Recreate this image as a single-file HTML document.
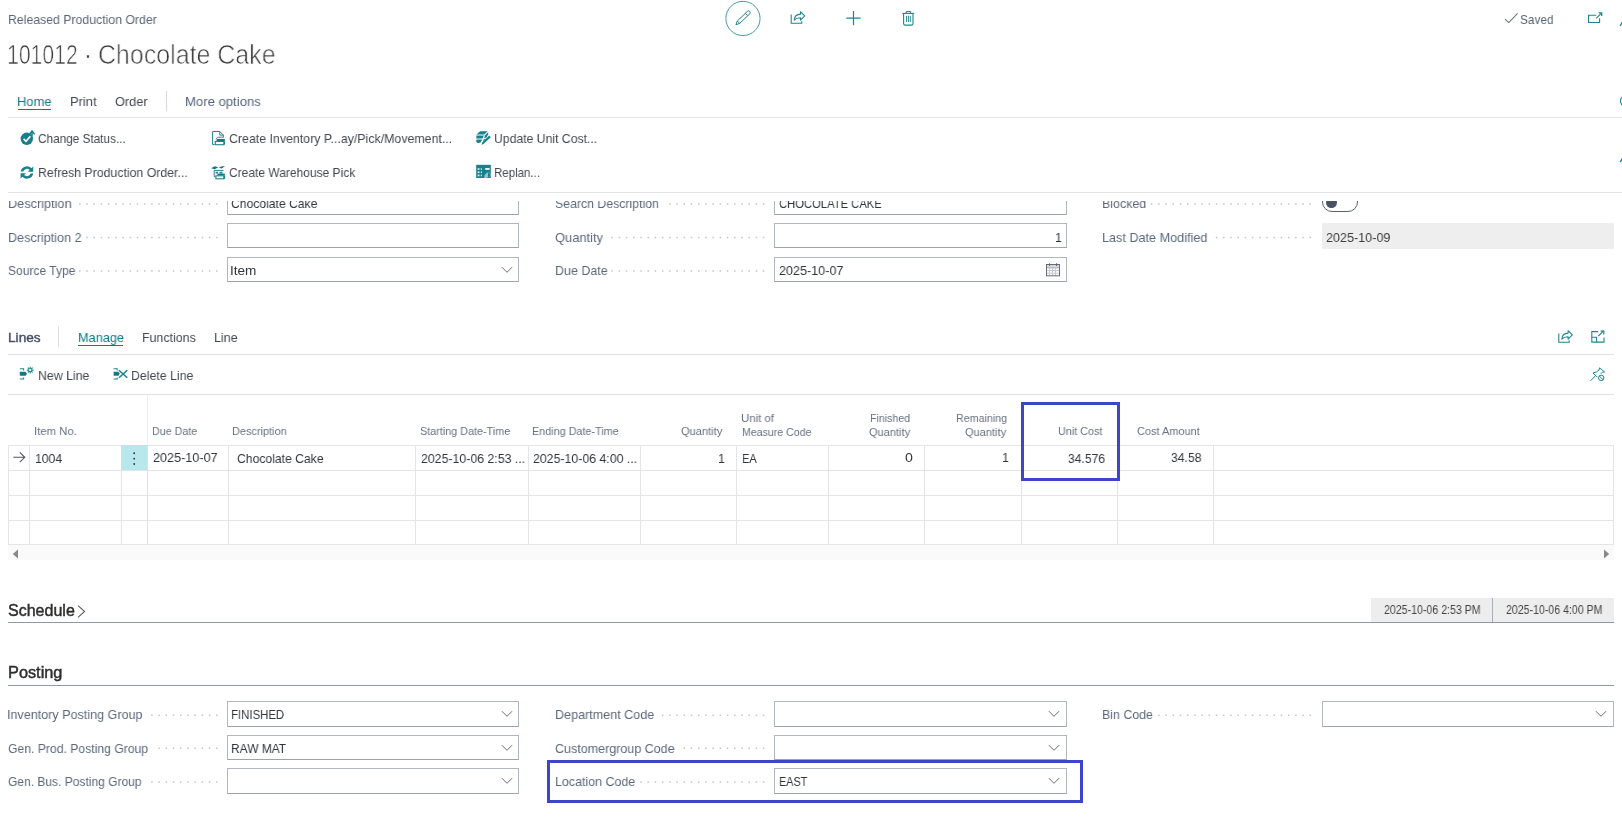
<!DOCTYPE html>
<html lang="en">
<head>
<meta charset="utf-8">
<title>101012 - Chocolate Cake - Released Production Order</title>
<style>
html,body{margin:0;padding:0;background:#fff;}
body{width:1622px;height:817px;position:relative;overflow:hidden;font-family:"Liberation Sans",sans-serif;}
.t{position:absolute;white-space:nowrap;display:block;transform-origin:0 0;will-change:transform;}
.a{position:absolute;display:block;}
.hl{position:absolute;height:1px;background:#e4e6e9;}
.vl{position:absolute;width:1px;background:#e1e3e7;}
.inp{position:absolute;box-sizing:border-box;height:25px;border:1px solid #b1b6bf;border-bottom-color:#9da2ad;background:#fff;}
.box{position:absolute;box-sizing:border-box;border:3px solid #3d45c8;}
svg{position:absolute;overflow:visible;}
</style>
</head>
<body>
<div class="hl" style="left:8px;top:117px;width:1614px;height:1px;background:#e4e6e9"></div>
<div class="hl" style="left:18px;top:109px;width:33px;height:1.4px;background:#0b7c85"></div>
<div class="vl" style="left:166px;top:91px;height:20px;width:1px;background:#d5d8dd"></div>
<div class="inp" style="left:227px;top:190px;width:292px;height:25px;"></div>
<div class="inp" style="left:227px;top:223px;width:292px;height:25px;"></div>
<div class="inp" style="left:227px;top:257px;width:292px;height:25px;"></div>
<div class="inp" style="left:774px;top:190px;width:293px;height:25px;"></div>
<div class="inp" style="left:774px;top:223px;width:293px;height:25px;"></div>
<div class="inp" style="left:774px;top:257px;width:293px;height:25px;"></div>
<svg style="left:501px;top:266px" width="12" height="8" viewBox="0 0 12 8"><path d="M0.9 1.2 L6 6.3 L11.1 1.2" fill="none" stroke="#60646c" stroke-width="0.95"/></svg>
<div class="a" style="left:1322px;top:223px;width:292px;height:26px;background:#eeeeef"></div>
<div class="a" style="left:1322px;top:191.5px;width:36px;height:20px;box-sizing:border-box;border:1px solid #5a6070;border-radius:10px;background:#fff"></div>
<div class="a" style="left:1326.4px;top:197.2px;width:10.8px;height:10.8px;border-radius:50%;background:#4b5266"></div>
<svg style="left:0;top:0" width="1622" height="817"><path d="M79.06 204.00 H217.60" stroke="#c0c4cc" stroke-width="1.5" stroke-dasharray="1.5 5.71" fill="none"/></svg>
<svg style="left:0;top:0" width="1622" height="817"><path d="M86.27 237.50 H217.60" stroke="#c0c4cc" stroke-width="1.5" stroke-dasharray="1.5 5.71" fill="none"/></svg>
<svg style="left:0;top:0" width="1622" height="817"><path d="M79.06 271.00 H217.60" stroke="#c0c4cc" stroke-width="1.5" stroke-dasharray="1.5 5.71" fill="none"/></svg>
<svg style="left:0;top:0" width="1622" height="817"><path d="M669.12 204.00 H764.40" stroke="#c0c4cc" stroke-width="1.5" stroke-dasharray="1.5 5.71" fill="none"/></svg>
<svg style="left:0;top:0" width="1622" height="817"><path d="M611.44 237.50 H764.40" stroke="#c0c4cc" stroke-width="1.5" stroke-dasharray="1.5 5.71" fill="none"/></svg>
<svg style="left:0;top:0" width="1622" height="817"><path d="M611.44 271.00 H764.40" stroke="#c0c4cc" stroke-width="1.5" stroke-dasharray="1.5 5.71" fill="none"/></svg>
<svg style="left:0;top:0" width="1622" height="817"><path d="M1150.93 204.00 H1311.10" stroke="#c0c4cc" stroke-width="1.5" stroke-dasharray="1.5 5.71" fill="none"/></svg>
<svg style="left:0;top:0" width="1622" height="817"><path d="M1215.82 237.50 H1311.10" stroke="#c0c4cc" stroke-width="1.5" stroke-dasharray="1.5 5.71" fill="none"/></svg>
<svg style="left:1046px;top:263px" width="14" height="14" viewBox="0 0 14 14"><rect x="1" y="2" width="12" height="2.6" fill="#d4d7dc" stroke="none"/><path d="M3.5 5.6v7M6.5 5.6v7M9.5 5.6v7M1 7.5h12M1 10.2h12" stroke="#c6c9cf" stroke-width="1"/><rect x="0.5" y="1.5" width="13" height="11.3" fill="none" stroke="#666c77" stroke-width="1"/><path d="M1 4.9h12" stroke="#8e939c" stroke-width="0.8"/><path d="M3.5 0.3v2.6M10.5 0.3v2.6" stroke="#596070" stroke-width="1"/></svg>
<div class="vl" style="left:58px;top:326px;height:21px;width:1px;background:#dcdfe3"></div>
<div class="hl" style="left:78px;top:344.6px;width:45px;height:1.4px;background:#0b7c85"></div>
<div class="hl" style="left:8px;top:354px;width:1606px;height:1px;background:#dfe2e6"></div>
<div class="hl" style="left:8px;top:394px;width:1606px;height:1px;background:#dfe2e6"></div>
<div class="hl" style="left:8px;top:445px;width:1606px;height:1px;background:#e4e5e9"></div>
<div class="hl" style="left:8px;top:470px;width:1606px;height:1px;background:#e4e5e9"></div>
<div class="hl" style="left:8px;top:495px;width:1606px;height:1px;background:#e4e5e9"></div>
<div class="hl" style="left:8px;top:520px;width:1606px;height:1px;background:#e4e5e9"></div>
<div class="hl" style="left:8px;top:544px;width:1606px;height:1px;background:#e4e5e9"></div>
<div class="vl" style="left:8px;top:445px;height:100px;width:1px;background:#e4e5e9"></div>
<div class="vl" style="left:29px;top:445px;height:100px;width:1px;background:#e4e5e9"></div>
<div class="vl" style="left:121px;top:445px;height:100px;width:1px;background:#e4e5e9"></div>
<div class="vl" style="left:228px;top:445px;height:100px;width:1px;background:#e4e5e9"></div>
<div class="vl" style="left:415px;top:445px;height:100px;width:1px;background:#e4e5e9"></div>
<div class="vl" style="left:528px;top:445px;height:100px;width:1px;background:#e4e5e9"></div>
<div class="vl" style="left:640px;top:445px;height:100px;width:1px;background:#e4e5e9"></div>
<div class="vl" style="left:736px;top:445px;height:100px;width:1px;background:#e4e5e9"></div>
<div class="vl" style="left:828px;top:445px;height:100px;width:1px;background:#e4e5e9"></div>
<div class="vl" style="left:924px;top:445px;height:100px;width:1px;background:#e4e5e9"></div>
<div class="vl" style="left:1021px;top:445px;height:100px;width:1px;background:#e4e5e9"></div>
<div class="vl" style="left:1117px;top:445px;height:100px;width:1px;background:#e4e5e9"></div>
<div class="vl" style="left:1213px;top:445px;height:100px;width:1px;background:#e4e5e9"></div>
<div class="vl" style="left:1613px;top:445px;height:100px;width:1px;background:#e4e5e9"></div>
<div class="a" style="left:121px;top:445px;width:26px;height:25px;background:#b8e8ec"></div>
<div class="vl" style="left:147px;top:395px;height:50px;width:1px;background:#ebedf0"></div>
<div class="vl" style="left:147px;top:445px;height:100px;width:1px;background:#dfe1e6"></div>
<div class="a" style="left:8px;top:545px;width:1606px;height:15px;background:#fafafa"></div>
<svg style="left:12px;top:549px" width="7" height="10" viewBox="0 0 7 10"><path d="M6 0.5 L0.8 5 L6 9.5Z" fill="#888"/></svg>
<svg style="left:1603px;top:549px" width="7" height="10" viewBox="0 0 7 10"><path d="M1 0.5 L6.2 5 L1 9.5Z" fill="#888"/></svg>
<svg style="left:13px;top:452px" width="13" height="11" viewBox="0 0 13 11"><path d="M0.3 5.3H11.8M6.8 0.4L11.8 5.3L6.8 10.2" fill="none" stroke="#505359" stroke-width="1.05"/></svg>
<svg style="left:0;top:0" width="1622" height="817"><circle cx="134.2" cy="453.3" r="0.95" fill="#333845"/><circle cx="134.2" cy="458.65" r="0.95" fill="#333845"/><circle cx="134.2" cy="464.0" r="0.95" fill="#333845"/></svg>
<svg style="left:76.5px;top:604.8px" width="9" height="13" viewBox="0 0 9 13"><path d="M1 0.7L7.6 6.5L1 12.3" fill="none" stroke="#5a5a5a" stroke-width="1.05"/></svg>
<div class="a" style="left:1371px;top:597.5px;width:243px;height:24.5px;background:#ededee"></div>
<div class="vl" style="left:1492px;top:597.5px;height:24.5px;width:1px;background:#a9adb5"></div>
<div class="hl" style="left:8px;top:622px;width:1606px;height:1px;background:#8f98ab"></div>
<div class="hl" style="left:8px;top:685px;width:1606px;height:1px;background:#8f98ab"></div>
<div class="inp" style="left:227px;top:701px;width:292px;height:26px;"></div>
<svg style="left:501px;top:710.2px" width="12" height="8" viewBox="0 0 12 8"><path d="M0.9 1.2 L6 6.3 L11.1 1.2" fill="none" stroke="#60646c" stroke-width="0.95"/></svg>
<div class="inp" style="left:774px;top:701px;width:293px;height:26px;"></div>
<svg style="left:1048px;top:710.2px" width="12" height="8" viewBox="0 0 12 8"><path d="M0.9 1.2 L6 6.3 L11.1 1.2" fill="none" stroke="#60646c" stroke-width="0.95"/></svg>
<div class="inp" style="left:227px;top:735px;width:292px;height:25px;"></div>
<svg style="left:501px;top:744.2px" width="12" height="8" viewBox="0 0 12 8"><path d="M0.9 1.2 L6 6.3 L11.1 1.2" fill="none" stroke="#60646c" stroke-width="0.95"/></svg>
<div class="inp" style="left:774px;top:735px;width:293px;height:25px;"></div>
<svg style="left:1048px;top:744.2px" width="12" height="8" viewBox="0 0 12 8"><path d="M0.9 1.2 L6 6.3 L11.1 1.2" fill="none" stroke="#60646c" stroke-width="0.95"/></svg>
<div class="inp" style="left:227px;top:768px;width:292px;height:26px;"></div>
<svg style="left:501px;top:777.2px" width="12" height="8" viewBox="0 0 12 8"><path d="M0.9 1.2 L6 6.3 L11.1 1.2" fill="none" stroke="#60646c" stroke-width="0.95"/></svg>
<div class="inp" style="left:774px;top:768px;width:293px;height:26px;"></div>
<svg style="left:1048px;top:777.2px" width="12" height="8" viewBox="0 0 12 8"><path d="M0.9 1.2 L6 6.3 L11.1 1.2" fill="none" stroke="#60646c" stroke-width="0.95"/></svg>
<div class="inp" style="left:1322px;top:701px;width:292px;height:26px;"></div>
<svg style="left:1595px;top:710.2px" width="12" height="8" viewBox="0 0 12 8"><path d="M0.9 1.2 L6 6.3 L11.1 1.2" fill="none" stroke="#60646c" stroke-width="0.95"/></svg>
<svg style="left:0;top:0" width="1622" height="817"><path d="M151.16 715.30 H217.60" stroke="#c0c4cc" stroke-width="1.5" stroke-dasharray="1.5 5.71" fill="none"/></svg>
<svg style="left:0;top:0" width="1622" height="817"><path d="M158.37 748.30 H217.60" stroke="#c0c4cc" stroke-width="1.5" stroke-dasharray="1.5 5.71" fill="none"/></svg>
<svg style="left:0;top:0" width="1622" height="817"><path d="M151.16 781.90 H217.60" stroke="#c0c4cc" stroke-width="1.5" stroke-dasharray="1.5 5.71" fill="none"/></svg>
<svg style="left:0;top:0" width="1622" height="817"><path d="M661.91 715.30 H764.40" stroke="#c0c4cc" stroke-width="1.5" stroke-dasharray="1.5 5.71" fill="none"/></svg>
<svg style="left:0;top:0" width="1622" height="817"><path d="M683.54 748.30 H764.40" stroke="#c0c4cc" stroke-width="1.5" stroke-dasharray="1.5 5.71" fill="none"/></svg>
<svg style="left:0;top:0" width="1622" height="817"><path d="M640.28 781.90 H764.40" stroke="#c0c4cc" stroke-width="1.5" stroke-dasharray="1.5 5.71" fill="none"/></svg>
<svg style="left:0;top:0" width="1622" height="817"><path d="M1158.14 715.30 H1311.10" stroke="#c0c4cc" stroke-width="1.5" stroke-dasharray="1.5 5.71" fill="none"/></svg>
<div class="box" style="left:1021px;top:402px;width:99px;height:79px"></div>
<div class="box" style="left:546.5px;top:760.2px;width:536.3px;height:43.2px"></div><svg style="left:0;top:0" width="1622" height="817" viewBox="0 0 1622 817" fill="none" stroke-linecap="butt" stroke-linejoin="miter">
<circle cx="742.95" cy="18.45" r="17.1" stroke="#4a999f" stroke-width="1"/>
<g stroke="#1f858d" stroke-width="1" stroke-linejoin="round"><path d="M735.9 24.7 L737.3 21.0 L747.4 11.4 A1.7 1.7 0 0 1 749.8 13.8 L739.7 23.4 Z"/><path d="M737.3 21.0 L739.7 23.4 M745.3 13.4 L747.7 15.8"/></g>
<g stroke="#1f858d" stroke-width="1.1"><path d="M791.2 14.6 V23.3 H801.7 V21.2"/><path d="M794.2 20.2 C794.4 16.6 796.8 14.3 800.5 14.1 V11.7 L804.7 15.9 L800.5 20.1 V17.7 C797.8 17.6 795.7 18.4 794.2 20.2 Z" stroke-linejoin="round"/></g>
<path d="M846.3 18.2 H860.7 M853.5 11.1 V25.2" stroke="#1f858d" stroke-width="1.2"/>
<g stroke="#1f858d" stroke-width="1.1"><path d="M902.3 13.4 H914.2"/><path d="M906.2 13.2 V12.3 A0.9 0.9 0 0 1 907.1 11.5 H909.7 A0.9 0.9 0 0 1 910.6 12.3 V13.2"/><path d="M903.6 13.4 V23.6 A1.6 1.6 0 0 0 905.2 25.1 H911.4 A1.6 1.6 0 0 0 913 23.6 V13.4"/><path d="M906.6 15.8 V22 M908.4 15.8 V22 M910.3 15.8 V22" stroke-width="0.95"/></g>
<path d="M1505.0 19.1 L1508.8 22.6 L1517.6 13.4" stroke="#66717f" stroke-width="1.05"/>
<g stroke="#1f858d" stroke-width="1.1"><path d="M1596.3 15.2 H1588.5 V22.5 H1599.6 V18.2"/><path d="M1596.2 18.3 L1601.2 13.3"/><path d="M1598.6 12.9 H1601.7 V16" stroke-width="1.3"/></g>
<path d="M1620.2 25.8 L1622.4 22.2" stroke="#1f858d" stroke-width="1.3"/>
<circle cx="1625.6" cy="101" r="5.2" stroke="#1f858d" stroke-width="1.1"/>
<path d="M1620.2 162.2 L1622.4 158.4" stroke="#1f858d" stroke-width="1.3"/>
<circle cx="26.8" cy="138.8" r="6.2" fill="#17808a"/>
<path d="M23.6 138.9 L26.0 141.3 L30.4 136.2" stroke="#fff" stroke-width="1.6"/>
<path d="M29.2 134.6 L32.0 131.0 L34.6 134.4 M32.0 131.4 V136.2" stroke="#17808a" stroke-width="1.5" />
<path d="M28.4 135.6 L31.9 130.9 L35.2 135.2" stroke="#fff" stroke-width="0.01"/>
<g fill="#17808a"><path d="M20.6 171.6 A6.4 6.4 0 0 1 31.4 168.2 L33.2 166.4 V171.8 H27.8 L29.7 169.9 A4 4 0 0 0 23.2 171.6 Z"/><path d="M33.2 173.4 A6.4 6.4 0 0 1 22.4 176.8 L20.6 178.6 V173.2 H26.0 L24.1 175.1 A4 4 0 0 0 30.6 173.4 Z"/></g>
<g stroke="#1f858d" stroke-width="1"><path d="M219.8 131.5 H212.6 V144.6 H214.6"/><path d="M219.8 131.5 L223.4 135.1 V137.6 M219.8 131.5 V135.1 H223.4"/><path d="M215.8 139.2 L217.6 137.2 H223.0" stroke-width="0.9"/></g>
<rect x="216.6" y="139.0" width="8.2" height="2.0" fill="#14787f"/>
<rect x="215.3" y="141.5" width="8.6" height="3.2" stroke="#1f858d" stroke-width="1.1"/>
<path d="M224.4 141.2 V144.6" stroke="#17808a" stroke-width="1.2"/>
<g fill="#14787f"><path d="M211.2 168.3 L214.6 166.3 L218.2 167.2 L214.8 169.2 Z"/><path d="M225.0 166.3 L221.6 168.6 L218.6 167.8 L222.0 166.3 Z"/></g>
<g stroke="#1f858d" stroke-width="1"><path d="M214.2 170.4 H223.4 M214.2 170.4 V176.6 H215.6"/><path d="M215.6 172.6 H218.0 M219.6 172.6 H222.4" stroke-width="1.6"/></g>
<rect x="217.4" y="173.6" width="7.4" height="1.8" fill="#14787f"/>
<rect x="215.9" y="175.8" width="7.9" height="3.0" stroke="#1f858d" stroke-width="1.1"/>
<path d="M224.5 175.4 V178.8" stroke="#17808a" stroke-width="1.2"/>
<g fill="#17808a"><path d="M476.4 134.6 L480.2 131.2 H487.8 L484.2 134.6 Z"/><path d="M476.4 135.6 H483.8 L482.6 138.4 H476.4 Z"/><path d="M485.0 135.2 L488.2 132.2 V134.2 L486.4 137.4 L484.2 138.2 Z"/><path d="M476.4 139.4 H482.2 L480.8 142.2 L478.0 143.2 L476.4 142.0 Z"/><path d="M489.2 135.6 L490.8 137.2 L484.0 143.6 L481.6 145.0 L482.4 142.2 Z"/><path d="M483.4 139.4 L486.6 138.6 L483.2 141.6 Z"/></g>
<rect x="476.2" y="164.8" width="14.6" height="13.2" fill="#17808a"/>
<g fill="#fff"><rect x="477.6" y="168.2" width="1.9" height="1.7" opacity="0.85"/><rect x="480.8" y="168.2" width="1.1" height="1.7" opacity="0.85"/><rect x="477.6" y="171.4" width="1.9" height="1.7" opacity="0.85"/><rect x="480.8" y="171.4" width="1.1" height="1.7" opacity="0.85"/><rect x="477.6" y="174.6" width="1.9" height="1.7" opacity="0.85"/><rect x="480.8" y="174.6" width="1.1" height="1.7" opacity="0.85"/><rect x="485.2" y="168.0" width="4.4" height="1.9" opacity="0.9"/><path d="M484.4 178.2 V175.6 L487.2 172.2 L488.4 173.4 V171.6 L491 174.8 L488.4 177.6 V176.2 L486.6 178.2 Z" opacity="0.55"/></g>
<path d="M488.0 172.0 L490.6 174.8 L488.0 177.4 Z" fill="#17808a"/>
<g stroke="#1f858d" stroke-width="1.1"><path d="M19.8 368.8 H23.6 V370.4 M19.8 379.0 H23.6 V377.4"/></g>
<path d="M19.8 371.8 H25.6 L27.0 373.8 L25.6 375.8 H19.8 Z" fill="#14787f"/>
<g stroke="#1f858d" stroke-width="1.15"><path d="M30.2 366.7 V373.5 M26.8 370.1 H33.6 M27.8 367.7 L32.6 372.5 M32.6 367.7 L27.8 372.5"/></g>
<circle cx="30.2" cy="370.1" r="1.15" fill="#fff"/>
<g stroke="#1f858d" stroke-width="1.1"><path d="M113.6 368.8 H117.2 V370.4 M113.6 379.0 H117.2 V377.4"/></g>
<path d="M113.6 371.8 H118.4 L119.8 373.8 L118.4 375.8 H113.6 Z" fill="#14787f"/>
<path d="M119.0 370.2 L127.2 377.8 M127.2 370.2 L119.0 377.8" stroke="#17808a" stroke-width="1.5"/>
<g stroke="#1f858d" stroke-width="1.1"><path d="M1558.8 333.6 V342.2 H1569.2 V340.2"/><path d="M1561.8 339.2 C1562 335.6 1564.4 333.3 1568.1 333.1 V330.7 L1572.3 334.9 L1568.1 339.1 V336.7 C1565.4 336.6 1563.3 337.4 1561.8 339.2 Z" stroke-linejoin="round"/></g>
<g stroke="#1f858d" stroke-width="1.1"><path d="M1598.2 331.6 H1591.8 V342.1 H1604.0 V337.4"/><path d="M1591.8 337.2 H1596.6 V342.1"/><path d="M1598.4 336.0 L1603.6 330.8"/><path d="M1600.6 331.2 H1603.8 V334.4" stroke-width="1.2"/></g>
<g stroke="#1f858d" stroke-width="1" stroke-linejoin="round"><path d="M1600.6 373.9 L1602.2 372.3 L1604.5 372.0 L1599.6 367.8 L1599.0 370.0 L1596.4 372.0 L1593.0 373.0 L1596.9 376.9"/><path d="M1595.2 376.0 L1590.7 380.7"/><circle cx="1601.2" cy="377.9" r="2.7"/><path d="M1599.3 376.1 L1603.1 379.7"/></g>
</svg>
<span class="t" id="t0" style="left:7.58px;top:10px;font-size:13.6px;line-height:20px;color:#5a6678;transform:scaleX(0.9033);">Released Production Order</span>
<span class="t" id="t1" style="left:7.26px;top:33px;font-size:28.2px;line-height:42px;color:#3a3a3a;transform:scaleX(0.7515);-webkit-text-stroke:0.7px #fff;">101012</span>
<span class="t" id="t2" style="left:83.00px;top:33px;font-size:28.2px;line-height:42px;color:#3a3a3a;transform:scaleX(1.0500);-webkit-text-stroke:0.7px #fff;">·</span>
<span class="t" id="t3" style="left:97.73px;top:33px;font-size:28.2px;line-height:42px;color:#3a3a3a;transform:scaleX(0.8853);-webkit-text-stroke:0.7px #fff;">Chocolate Cake</span>
<span class="t" id="t4" style="left:17.13px;top:92px;font-size:13.6px;line-height:20px;color:#0b7c85;transform:scaleX(0.9503);">Home</span>
<span class="t" id="t5" style="left:69.63px;top:92px;font-size:13.6px;line-height:20px;color:#44484f;transform:scaleX(0.9506);">Print</span>
<span class="t" id="t6" style="left:114.76px;top:92px;font-size:13.6px;line-height:20px;color:#44484f;transform:scaleX(0.9393);">Order</span>
<span class="t" id="t7" style="left:184.61px;top:92px;font-size:13.6px;line-height:20px;color:#56647a;transform:scaleX(0.9646);">More options</span>
<span class="t" id="t8" style="left:38.17px;top:129px;font-size:13.6px;line-height:20px;color:#44484f;transform:scaleX(0.8663);">Change Status...</span>
<span class="t" id="t9" style="left:229.04px;top:129px;font-size:13.6px;line-height:20px;color:#44484f;transform:scaleX(0.9097);">Create Inventory P...ay/Pick/Movement...</span>
<span class="t" id="t10" style="left:494.25px;top:129px;font-size:13.6px;line-height:20px;color:#44484f;transform:scaleX(0.8981);">Update Unit Cost...</span>
<span class="t" id="t11" style="left:37.88px;top:163px;font-size:13.6px;line-height:20px;color:#44484f;transform:scaleX(0.9047);">Refresh Production Order...</span>
<span class="t" id="t12" style="left:229.06px;top:163px;font-size:13.6px;line-height:20px;color:#44484f;transform:scaleX(0.8827);">Create Warehouse Pick</span>
<span class="t" id="t13" style="left:494.25px;top:163px;font-size:13.6px;line-height:20px;color:#44484f;transform:scaleX(0.8438);">Replan...</span>
<span class="t" id="t14" style="left:1519.57px;top:10px;font-size:13.6px;line-height:20px;color:#5a6678;transform:scaleX(0.8696);">Saved</span>
<span class="t" id="t15" style="left:7.64px;top:194px;font-size:13.6px;line-height:20px;color:#5c687a;transform:scaleX(0.9352);">Description</span>
<span class="t" id="t16" style="left:7.65px;top:228px;font-size:13.6px;line-height:20px;color:#5c687a;transform:scaleX(0.9280);">Description 2</span>
<span class="t" id="t17" style="left:7.85px;top:261px;font-size:13.6px;line-height:20px;color:#5c687a;transform:scaleX(0.8865);">Source Type</span>
<span class="t" id="t18" style="left:231.25px;top:194px;font-size:13.6px;line-height:20px;color:#333639;transform:scaleX(0.8932);">Chocolate Cake</span>
<span class="t" id="t19" style="left:230.45px;top:261px;font-size:13.6px;line-height:20px;color:#333639;transform:scaleX(0.9857);">Item</span>
<span class="t" id="t20" style="left:554.73px;top:194px;font-size:13.6px;line-height:20px;color:#5c687a;transform:scaleX(0.9048);">Search Description</span>
<span class="t" id="t21" style="left:555.05px;top:228px;font-size:13.6px;line-height:20px;color:#5c687a;transform:scaleX(0.9488);">Quantity</span>
<span class="t" id="t22" style="left:554.96px;top:261px;font-size:13.6px;line-height:20px;color:#5c687a;transform:scaleX(0.9187);">Due Date</span>
<span class="t" id="t23" style="left:778.80px;top:194px;font-size:13.6px;line-height:20px;color:#333639;transform:scaleX(0.8261);">CHOCOLATE CAKE</span>
<span class="t" id="t24" style="left:1055.32px;top:228px;font-size:13.6px;line-height:20px;color:#333639;transform:scaleX(0.9000);">1</span>
<span class="t" id="t25" style="left:779.05px;top:261px;font-size:13.6px;line-height:20px;color:#333639;transform:scaleX(0.9259);">2025-10-07</span>
<span class="t" id="t26" style="left:1101.97px;top:194px;font-size:13.6px;line-height:20px;color:#5c687a;transform:scaleX(0.9143);">Blocked</span>
<span class="t" id="t27" style="left:1101.95px;top:228px;font-size:13.6px;line-height:20px;color:#5c687a;transform:scaleX(0.9302);">Last Date Modified</span>
<span class="t" id="t28" style="left:1326.35px;top:228px;font-size:13.6px;line-height:20px;color:#3c3c3c;transform:scaleX(0.9258);">2025-10-09</span>
<span class="t" id="t29" style="left:8.21px;top:328px;font-size:13.3px;line-height:20px;color:#465063;transform:scaleX(1.0279);-webkit-text-stroke:0.4px #465063;">Lines</span>
<span class="t" id="t30" style="left:77.54px;top:328px;font-size:13.6px;line-height:20px;color:#0b7c85;transform:scaleX(0.9371);">Manage</span>
<span class="t" id="t31" style="left:141.67px;top:328px;font-size:13.6px;line-height:20px;color:#44484f;transform:scaleX(0.9122);">Functions</span>
<span class="t" id="t32" style="left:213.86px;top:328px;font-size:13.6px;line-height:20px;color:#44484f;transform:scaleX(0.9174);">Line</span>
<span class="t" id="t33" style="left:38.28px;top:366px;font-size:13.6px;line-height:20px;color:#44484f;transform:scaleX(0.9075);">New Line</span>
<span class="t" id="t34" style="left:131.38px;top:366px;font-size:13.6px;line-height:20px;color:#44484f;transform:scaleX(0.9062);">Delete Line</span>
<span class="t" id="t35" style="left:33.94px;top:422px;font-size:11.7px;line-height:18px;color:#677080;transform:scaleX(0.9684);">Item No.</span>
<span class="t" id="t36" style="left:151.99px;top:422px;font-size:11.7px;line-height:18px;color:#677080;transform:scaleX(0.9139);">Due Date</span>
<span class="t" id="t37" style="left:232.46px;top:422px;font-size:11.7px;line-height:18px;color:#677080;transform:scaleX(0.9362);">Description</span>
<span class="t" id="t38" style="left:419.73px;top:422px;font-size:11.7px;line-height:18px;color:#677080;transform:scaleX(0.9239);">Starting Date-Time</span>
<span class="t" id="t39" style="left:532.28px;top:422px;font-size:11.7px;line-height:18px;color:#677080;transform:scaleX(0.9244);">Ending Date-Time</span>
<span class="t" id="t40" style="left:681.22px;top:422px;font-size:11.7px;line-height:18px;color:#677080;transform:scaleX(0.9495);">Quantity</span>
<span class="t" id="t41" style="left:741.42px;top:409px;font-size:11.7px;line-height:18px;color:#677080;transform:scaleX(0.9760);">Unit of</span>
<span class="t" id="t42" style="left:741.50px;top:423px;font-size:11.7px;line-height:18px;color:#677080;transform:scaleX(0.9046);">Measure Code</span>
<span class="t" id="t43" style="left:870.19px;top:409px;font-size:11.7px;line-height:18px;color:#677080;transform:scaleX(0.9066);">Finished</span>
<span class="t" id="t44" style="left:868.63px;top:423px;font-size:11.7px;line-height:18px;color:#677080;transform:scaleX(0.9448);">Quantity</span>
<span class="t" id="t45" style="left:955.68px;top:409px;font-size:11.7px;line-height:18px;color:#677080;transform:scaleX(0.9153);">Remaining</span>
<span class="t" id="t46" style="left:965.03px;top:423px;font-size:11.7px;line-height:18px;color:#677080;transform:scaleX(0.9448);">Quantity</span>
<span class="t" id="t47" style="left:1058.48px;top:422px;font-size:11.7px;line-height:18px;color:#677080;transform:scaleX(0.9236);">Unit Cost</span>
<span class="t" id="t48" style="left:1136.60px;top:422px;font-size:11.7px;line-height:18px;color:#677080;transform:scaleX(0.9361);">Cost Amount</span>
<span class="t" id="t49" style="left:35.47px;top:449px;font-size:13.6px;line-height:20px;color:#333639;transform:scaleX(0.8977);">1004</span>
<span class="t" id="t50" style="left:153.24px;top:448px;font-size:13.6px;line-height:20px;color:#333639;transform:scaleX(0.9288);">2025-10-07</span>
<span class="t" id="t51" style="left:237.05px;top:449px;font-size:13.6px;line-height:20px;color:#333639;transform:scaleX(0.8953);">Chocolate Cake</span>
<span class="t" id="t52" style="left:420.86px;top:449px;font-size:13.6px;line-height:20px;color:#333639;transform:scaleX(0.9068);">2025-10-06 2:53 ...</span>
<span class="t" id="t53" style="left:533.06px;top:449px;font-size:13.6px;line-height:20px;color:#333639;transform:scaleX(0.9068);">2025-10-06 4:00 ...</span>
<span class="t" id="t54" style="left:717.76px;top:449px;font-size:13.6px;line-height:20px;color:#333639;transform:scaleX(0.9000);">1</span>
<span class="t" id="t55" style="left:742.48px;top:449px;font-size:13.6px;line-height:20px;color:#333639;transform:scaleX(0.8139);">EA</span>
<span class="t" id="t56" style="left:904.51px;top:448px;font-size:13.6px;line-height:20px;color:#333639;transform:scaleX(1.0418);">0</span>
<span class="t" id="t57" style="left:1001.66px;top:448px;font-size:13.6px;line-height:20px;color:#333639;transform:scaleX(0.9000);">1</span>
<span class="t" id="t58" style="left:1068.01px;top:449px;font-size:13.6px;line-height:20px;color:#333639;transform:scaleX(0.8906);">34.576</span>
<span class="t" id="t59" style="left:1171.11px;top:448px;font-size:13.6px;line-height:20px;color:#333639;transform:scaleX(0.8947);">34.58</span>
<span class="t" id="t60" style="left:7.91px;top:599px;font-size:16.0px;line-height:24px;color:#2e2e2e;transform:scaleX(1.0012);-webkit-text-stroke:0.45px #2e2e2e;">Schedule</span>
<span class="t" id="t61" style="left:8.33px;top:661px;font-size:16.0px;line-height:24px;color:#2e2e2e;transform:scaleX(1.0195);-webkit-text-stroke:0.45px #2e2e2e;">Posting</span>
<span class="t" id="t62" style="left:1383.85px;top:601px;font-size:11.9px;line-height:18px;color:#454545;transform:scaleX(0.8914);">2025-10-06 2:53 PM</span>
<span class="t" id="t63" style="left:1505.65px;top:601px;font-size:11.9px;line-height:18px;color:#454545;transform:scaleX(0.8895);">2025-10-06 4:00 PM</span>
<span class="t" id="t64" style="left:7.33px;top:705px;font-size:13.6px;line-height:20px;color:#5c687a;transform:scaleX(0.9242);">Inventory Posting Group</span>
<span class="t" id="t65" style="left:7.85px;top:739px;font-size:13.6px;line-height:20px;color:#5c687a;transform:scaleX(0.8957);">Gen. Prod. Posting Group</span>
<span class="t" id="t66" style="left:7.86px;top:772px;font-size:13.6px;line-height:20px;color:#5c687a;transform:scaleX(0.8837);">Gen. Bus. Posting Group</span>
<span class="t" id="t67" style="left:231.45px;top:705px;font-size:13.6px;line-height:20px;color:#333639;transform:scaleX(0.8392);">FINISHED</span>
<span class="t" id="t68" style="left:231.41px;top:739px;font-size:13.6px;line-height:20px;color:#333639;transform:scaleX(0.8806);">RAW MAT</span>
<span class="t" id="t69" style="left:554.86px;top:705px;font-size:13.6px;line-height:20px;color:#5c687a;transform:scaleX(0.9250);">Department Code</span>
<span class="t" id="t70" style="left:555.23px;top:739px;font-size:13.6px;line-height:20px;color:#5c687a;transform:scaleX(0.9202);">Customergroup Code</span>
<span class="t" id="t71" style="left:554.87px;top:772px;font-size:13.6px;line-height:20px;color:#5c687a;transform:scaleX(0.9153);">Location Code</span>
<span class="t" id="t72" style="left:778.50px;top:772px;font-size:13.6px;line-height:20px;color:#333639;transform:scaleX(0.7942);">EAST</span>
<span class="t" id="t73" style="left:1101.87px;top:705px;font-size:13.6px;line-height:20px;color:#5c687a;transform:scaleX(0.9114);">Bin Code</span>
<div class="a" style="left:0;top:184px;width:1622px;height:17px;background:#fff"></div><div class="hl" style="left:8px;top:192px;width:1614px;height:1px;background:#e2e4e7"></div>
</body>
</html>
